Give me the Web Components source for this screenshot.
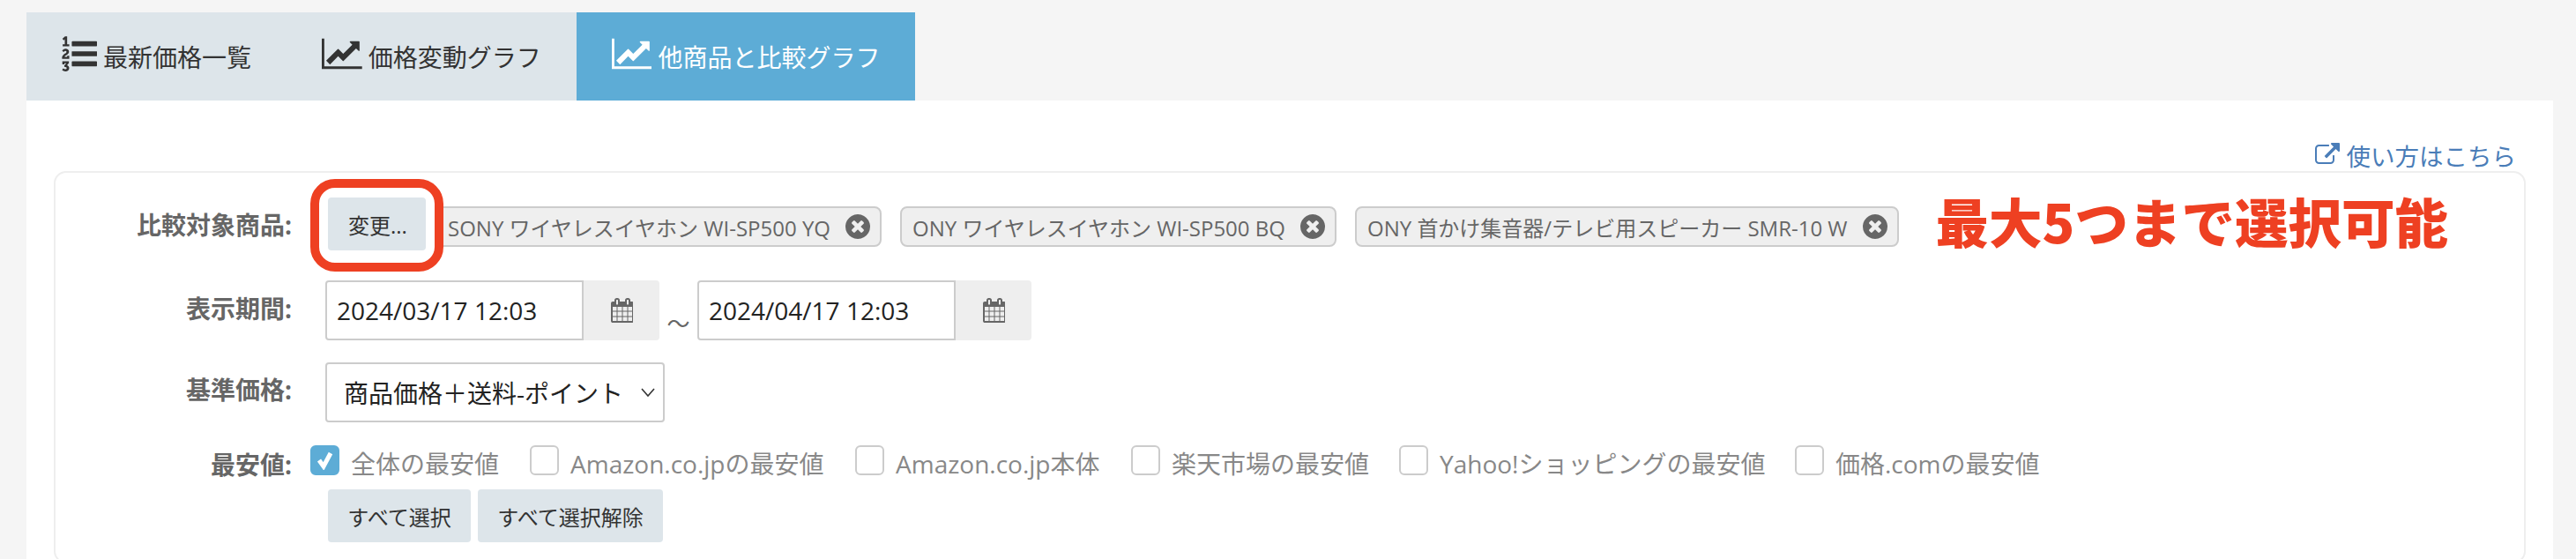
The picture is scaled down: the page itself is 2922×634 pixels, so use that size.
<!DOCTYPE html>
<html lang="ja">
<head>
<meta charset="utf-8">
<title>他商品と比較グラフ</title>
<style>
  html, body { margin: 0; height: 100%; overflow: hidden; }
  body {
    background: #f5f5f5;
    font-family: "Open Sans", "Noto Sans CJK JP", sans-serif;
    font-size: 28px;
    color: #333;
  }
</style>
</head>
<body>
<graph-page>
  <tab-bar slot="tabs">
    <tab-item icon="list">最新価格一覧</tab-item>
    <tab-item icon="chart">価格変動グラフ</tab-item>
    <tab-item icon="chart" active>他商品と比較グラフ</tab-item>
  </tab-bar>
  <help-link slot="help">使い方はこちら</help-link>
  <form-row label="比較対象商品:" start="20" top="28" height="60">
    <change-button>変更...</change-button>
    <product-chip first>SONY ワイヤレスイヤホン WI-SP500 YQ</product-chip>
    <product-chip>ONY ワイヤレスイヤホン WI-SP500 BQ</product-chip>
    <product-chip>ONY 首かけ集音器/テレビ用スピーカー SMR-10 W</product-chip>
    <note-text>最大5つまで選択可能</note-text>
  </form-row>
  <form-row label="表示期間:" start="17" top="34" height="68" raise="6">
    <date-field>2024/03/17 12:03</date-field>
    <range-mark>～</range-mark>
    <date-field>2024/04/17 12:03</date-field>
  </form-row>
  <form-row label="基準価格:" start="17" top="25" height="68" raise="8">
    <select-box>商品価格＋送料-ポイント</select-box>
  </form-row>
  <form-row label="最安値:" start="0" top="26" height="34" drop="8">
    <check-option checked width="249">全体の最安値</check-option>
    <check-option width="369">Amazon.co.jpの最安値</check-option>
    <check-option width="313">Amazon.co.jp本体</check-option>
    <check-option width="304">楽天市場の最安値</check-option>
    <check-option width="449">Yahoo!ショッピングの最安値</check-option>
    <check-option>価格.comの最安値</check-option>
  </form-row>
  <form-row start="20" top="16" height="60">
    <soft-button width="162">すべて選択</soft-button>
    <soft-button width="210" style="margin-left:8px">すべて選択解除</soft-button>
  </form-row>
</graph-page>

<script>
const ICONS = {
  list: ['0 0 1792 1792', 'M381 1620q0 80-54.500 126t-135.500 46q-106 0-172-66l57-88q49 45 106 45 29 0 50.500-14.500t21.500-42.500q0-64-105-56l-26-56q8-10 32.500-43.500t42.500-54 37-38.500v-1q-16 0-48.500 1t-48.500 1v53h-106v-152h333v88l-95 115q51 12 81 49t30 88zm2-627v159h-362q-6-36-6-54 0-51 23.500-93t56.500-68 66-47.500 56.500-43.500 23.500-45q0-25-14.500-38.500t-39.500-13.500q-46 0-81 58l-85-59q24-51 71.500-79.500t105.500-28.500q73 0 123 41.500t50 112.500q0 50-34 91.500t-75 64.500-75.500 50.500-35.500 52.500h127v-60h105zm1409 319v192q0 13-9.500 22.500t-22.500 9.500h-1216q-13 0-22.500-9.500t-9.500-22.500v-192q0-14 9-23t23-9h1216q13 0 22.500 9.500t9.500 22.500zm-1408-899v99h-335v-99h107q0-41 .5-122t.5-121v-12h-2q-8 17-50 54l-71-76 136-127h106v404h108zm1408 387v192q0 13-9.500 22.500t-22.500 9.500h-1216q-13 0-22.500-9.500t-9.500-22.500v-192q0-14 9-23t23-9h1216q13 0 22.500 9.500t9.500 22.500zm0-512v192q0 13-9.500 22.500t-22.500 9.500h-1216q-13 0-22.500-9.500t-9.500-22.500v-192q0-13 9.500-22.500t22.500-9.500h1216q13 0 22.500 9.500t9.500 22.500z', 40],
  chart: ['0 0 2048 1792', 'M2048 1536v128h-2048v-1536h128v1408h1920zm-128-1248v435q0 21-19.500 29.500t-35.500-7.500l-121-121-633 633q-10 10-23 10t-23-10l-233-233-416 416-192-192 585-585q10-10 23-10t23 10l233 233 464-464-121-121q-16-16-7.500-35.500t29.500-19.500h435q14 0 23 9t9 23z', 45.7],
  calendar: ['0 0 1664 1792', 'M192 1664h288v-288h-288v288zm352 0h320v-288h-320v288zm-352-352h288v-320h-288v320zm352 0h320v-320h-320v320zm-352-384h288v-288h-288v288zm736 736h320v-288h-320v288zm-384-736h320v-288h-320v288zm768 736h288v-288h-288v288zm-384-352h320v-320h-320v320zm-352-864v-288q0-13-9.500-22.500t-22.500-9.500h-64q-13 0-22.500 9.500t-9.500 22.500v288q0 13 9.500 22.500t22.500 9.500h64q13 0 22.500-9.500t9.500-22.500zm736 864h288v-320h-288v320zm-384-384h320v-288h-320v288zm384 0h288v-288h-288v288zm32-480v-288q0-13-9.500-22.500t-22.500-9.500h-64q-13 0-22.500 9.500t-9.500 22.500v288q0 13 9.500 22.500t22.500 9.500h64q13 0 22.500-9.500t9.500-22.500zm384-64v1280q0 52-38 90t-90 38h-1408q-52 0-90-38t-38-90v-1280q0-52 38-90t90-38h128v-96q0-66 47-113t113-47h64q66 0 113 47t47 113v96h384v-96q0-66 47-113t113-47h64q66 0 113 47t47 113v96h128q52 0 90 38t38 90z', 26],
  link: ['0 0 1792 1792', 'M1408 928v320q0 119-84.500 203.500t-203.500 84.500h-832q-119 0-203.500-84.500t-84.500-203.500v-832q0-119 84.500-203.500t203.500-84.500h704q14 0 23 9t9 23v64q0 14-9 23t-23 9h-704q-66 0-113 47t-47 113v832q0 66 47 113t113 47h832q66 0 113-47t47-113v-320q0-14 9-23t23-9h64q14 0 23 9t9 23zm384-864v512q0 26-19 45t-45 19-45-19l-176-176-652 652q-10 10-23 10t-23-10l-114-114q-10-10-10-23t10-23l652-652-176-176q-19-19-19-45t19-45 45-19h512q26 0 45 19t19 45z', 28],
  close: ['0 128 1536 1536', 'M1149 1122q0-26-19-45l-181-181 181-181q19-19 19-45 0-27-19-46l-90-90q-19-19-46-19-26 0-45 19l-181 181-181-181q-19-19-45-19-27 0-46 19l-90 90q-19 19-19 46 0 26 19 45l181 181-181 181q-19 19-19 45 0 27 19 46l90 90q19 19 46 19 26 0 45-19l181-181 181 181q19 19 45 19 27 0 46-19l90-90q19-19 19-46zm387-226q0 209-103 385.500t-279.500 279.500-385.500 103-385.500-103-279.500-279.500-103-385.500 103-385.500 279.500-279.500 385.500-103 385.500 103 279.500 279.500 103 385.500z', 28]
};

function icon(name) {
  const [box, d, w] = ICONS[name];
  const [, , vw, vh] = box.split(' ').map(Number);
  return `<svg width="${w}" height="${w * vh / vw}" viewBox="${box}" fill="currentColor" style="display:block;flex:none"><path d="${d}"/></svg>`;
}

class GraphPage extends HTMLElement {
  connectedCallback() {
    this.attachShadow({ mode: 'open' });
    this.shadowRoot.innerHTML = `
      <style>
        :host { display: block; padding: 14px 26px 0 30px; }
        .panel {
          background: #fff;
          height: 520px;
          box-sizing: border-box;
          padding: 44px 31px 0 31px;
        }
        .help { display: flex; justify-content: flex-end; height: 36px; padding-right: 11px; }
        .box {
          border: 2px solid #eee;
          border-radius: 14px;
          padding-bottom: 22px;
        }
      </style>
      <slot name="tabs"></slot>
      <div class="panel">
        <div class="help"><slot name="help"></slot></div>
        <div class="box"><slot></slot></div>
      </div>`;
  }
}

class TabBar extends HTMLElement {
  connectedCallback() {
    this.attachShadow({ mode: 'open' });
    this.shadowRoot.innerHTML = `
      <style>:host { display: flex; height: 100px; }</style>
      <slot></slot>`;
  }
}

class TabItem extends HTMLElement {
  connectedCallback() {
    this.attachShadow({ mode: 'open' });
    const active = this.hasAttribute('active');
    this.shadowRoot.innerHTML = `
      <style>
        :host {
          display: flex;
          align-items: center;
          gap: 7px;
          padding: 0 40px;
          background: ${active ? '#5dacd6' : '#dde5ea'};
          color: ${active ? '#fff' : '#333'};
        }
        svg { margin-bottom: 6px; }
      </style>
      ${icon(this.getAttribute('icon'))}<slot></slot>`;
  }
}

class HelpLink extends HTMLElement {
  connectedCallback() {
    this.attachShadow({ mode: 'open' });
    this.shadowRoot.innerHTML = `
      <style>
        :host { display: flex; align-items: center; gap: 8px; color: #4a7db8; font-size: 27.5px; height: 36px; }
      </style>
      ${icon('link')}<slot></slot>`;
  }
}

class FormRow extends HTMLElement {
  connectedCallback() {
    this.attachShadow({ mode: 'open' });
    const label = this.getAttribute('label') || '';
    const raise = this.getAttribute('raise') || 0;
    const drop = this.getAttribute('drop') || 0;
    this.shadowRoot.innerHTML = `
      <style>
        :host {
          display: flex;
          align-items: center;
          height: ${this.getAttribute('height')}px;
          margin-top: ${this.getAttribute('top')}px;
        }
        .label {
          flex: none;
          width: 268px;
          text-align: right;
          font-weight: 700;
          color: #666;
          padding: ${drop}px 0 ${raise}px;
          box-sizing: border-box;
        }
        .controls {
          display: flex;
          align-items: center;
          margin-left: ${21 + Number(this.getAttribute('start'))}px;
        }
      </style>
      <div class="label">${label}</div>
      <div class="controls"><slot></slot></div>`;
  }
}

class SoftButton extends HTMLElement {
  connectedCallback() {
    this.attachShadow({ mode: 'open' });
    this.shadowRoot.innerHTML = `
      <style>
        :host {
          display: flex;
          align-items: center;
          justify-content: center;
          width: ${this.getAttribute('width')}px;
          height: 60px;
          background: #dde5ea;
          border-radius: 4px;
          color: #333;
          font-size: 24px;
        }
      </style>
      <slot></slot>`;
  }
}

// the hand-drawn red ring of the annotation lies over the first chip
class ChangeButton extends HTMLElement {
  connectedCallback() {
    this.attachShadow({ mode: 'open' });
    this.shadowRoot.innerHTML = `
      <style>
        :host { display: block; position: relative; z-index: 1; }
        .ring {
          position: absolute;
          inset: -21px -20px -24px;
          border: 10px solid #ee4022;
          border-radius: 28px;
          background: #fff;
        }
        .face {
          position: relative;
          display: flex;
          align-items: center;
          width: 111px;
          height: 60px;
          box-sizing: border-box;
          padding-left: 23px;
          background: #dde5ea;
          border-radius: 4px;
          color: #333;
          font-size: 24px;
        }
      </style>
      <div class="ring"></div>
      <div class="face"><slot></slot></div>`;
  }
}

class ProductChip extends HTMLElement {
  connectedCallback() {
    this.attachShadow({ mode: 'open' });
    this.shadowRoot.innerHTML = `
      <style>
        :host {
          display: flex;
          align-items: center;
          height: 46px;
          box-sizing: border-box;
          margin: 6px 0 0 ${this.hasAttribute('first') ? 8 : 21}px;
          padding: 0 11px 0 ${this.hasAttribute('first') ? 15 : 12}px;
          background: #efefef;
          border: 2px solid #ccc;
          border-radius: 8px;
          color: #666;
          font-size: 24px;
          white-space: nowrap;
        }
        svg { margin-left: 17px; }
      </style>
      <slot></slot>${icon('close')}`;
  }
}

class NoteText extends HTMLElement {
  connectedCallback() {
    this.attachShadow({ mode: 'open' });
    this.shadowRoot.innerHTML = `
      <style>
        :host {
          display: block;
          margin: 0 0 8px 42px;
          font-family: "Noto Sans CJK JP", sans-serif;
          font-weight: 900;
          font-size: 60.5px;
          line-height: 52px;
          color: #ee4022;
          white-space: nowrap;
        }
      </style>
      <slot></slot>`;
  }
}

class DateField extends HTMLElement {
  connectedCallback() {
    this.attachShadow({ mode: 'open' });
    this.shadowRoot.innerHTML = `
      <style>
        :host { display: flex; height: 68px; }
        .value {
          display: flex;
          align-items: center;
          width: 293px;
          box-sizing: border-box;
          padding-left: 11px;
          background: #fff;
          border: 2px solid #ccc;
          border-radius: 4px 0 0 4px;
          color: #222;
        }
        .addon {
          display: flex;
          align-items: center;
          justify-content: center;
          width: 86px;
          background: #eee;
          border-radius: 0 4px 4px 0;
          color: #666;
        }
      </style>
      <div class="value"><slot></slot></div>
      <div class="addon">${icon('calendar')}</div>`;
  }
}

class RangeMark extends HTMLElement {
  connectedCallback() {
    this.attachShadow({ mode: 'open' });
    this.shadowRoot.innerHTML = `
      <style>
        :host {
          display: block;
          width: 43px;
          margin-top: 30px;
          text-align: center;
          font-size: 26px;
          line-height: 30px;
          color: #666;
        }
      </style>
      <slot></slot>`;
  }
}

class SelectBox extends HTMLElement {
  connectedCallback() {
    this.attachShadow({ mode: 'open' });
    this.shadowRoot.innerHTML = `
      <style>
        :host {
          display: flex;
          align-items: center;
          justify-content: space-between;
          width: 385px;
          height: 68px;
          box-sizing: border-box;
          padding: 0 9px 0 19px;
          background: #fff;
          border: 2px solid #ccc;
          border-radius: 4px;
          color: #222;
          white-space: nowrap;
        }
      </style>
      <slot></slot>
      <svg width="16" height="10" viewBox="0 0 16 10" fill="none" stroke="#333" stroke-width="1.6"><path d="M1 1l7 8 7-8"/></svg>`;
  }
}

class CheckOption extends HTMLElement {
  connectedCallback() {
    this.attachShadow({ mode: 'open' });
    const checked = this.hasAttribute('checked');
    const width = this.getAttribute('width');
    this.shadowRoot.innerHTML = `
      <style>
        :host {
          display: flex;
          align-items: center;
          gap: 13px;
          height: 34px;
          ${width ? `width:${width}px;` : ''}
          color: #888;
          white-space: nowrap;
        }
        .mark {
          flex: none;
          display: flex;
          align-items: center;
          justify-content: center;
          width: 33px;
          height: 34px;
          box-sizing: border-box;
          border: 2px solid ${checked ? '#5dacd6' : '#ccc'};
          border-radius: 6px;
          background: ${checked ? '#5dacd6' : '#fff'};
        }
        span { padding-top: 6px; }
      </style>
      <div class="mark">${checked ? '<svg width="22" height="22" viewBox="0 0 22 22" fill="none" stroke="#fff" stroke-width="5"><path d="M4 11l5 7 8-15"/></svg>' : ''}</div>
      <span><slot></slot></span>`;
  }
}

customElements.define('graph-page', GraphPage);
customElements.define('tab-bar', TabBar);
customElements.define('tab-item', TabItem);
customElements.define('help-link', HelpLink);
customElements.define('form-row', FormRow);
customElements.define('soft-button', SoftButton);
customElements.define('change-button', ChangeButton);
customElements.define('product-chip', ProductChip);
customElements.define('note-text', NoteText);
customElements.define('date-field', DateField);
customElements.define('range-mark', RangeMark);
customElements.define('select-box', SelectBox);
customElements.define('check-option', CheckOption);
</script>
</body>
</html>
